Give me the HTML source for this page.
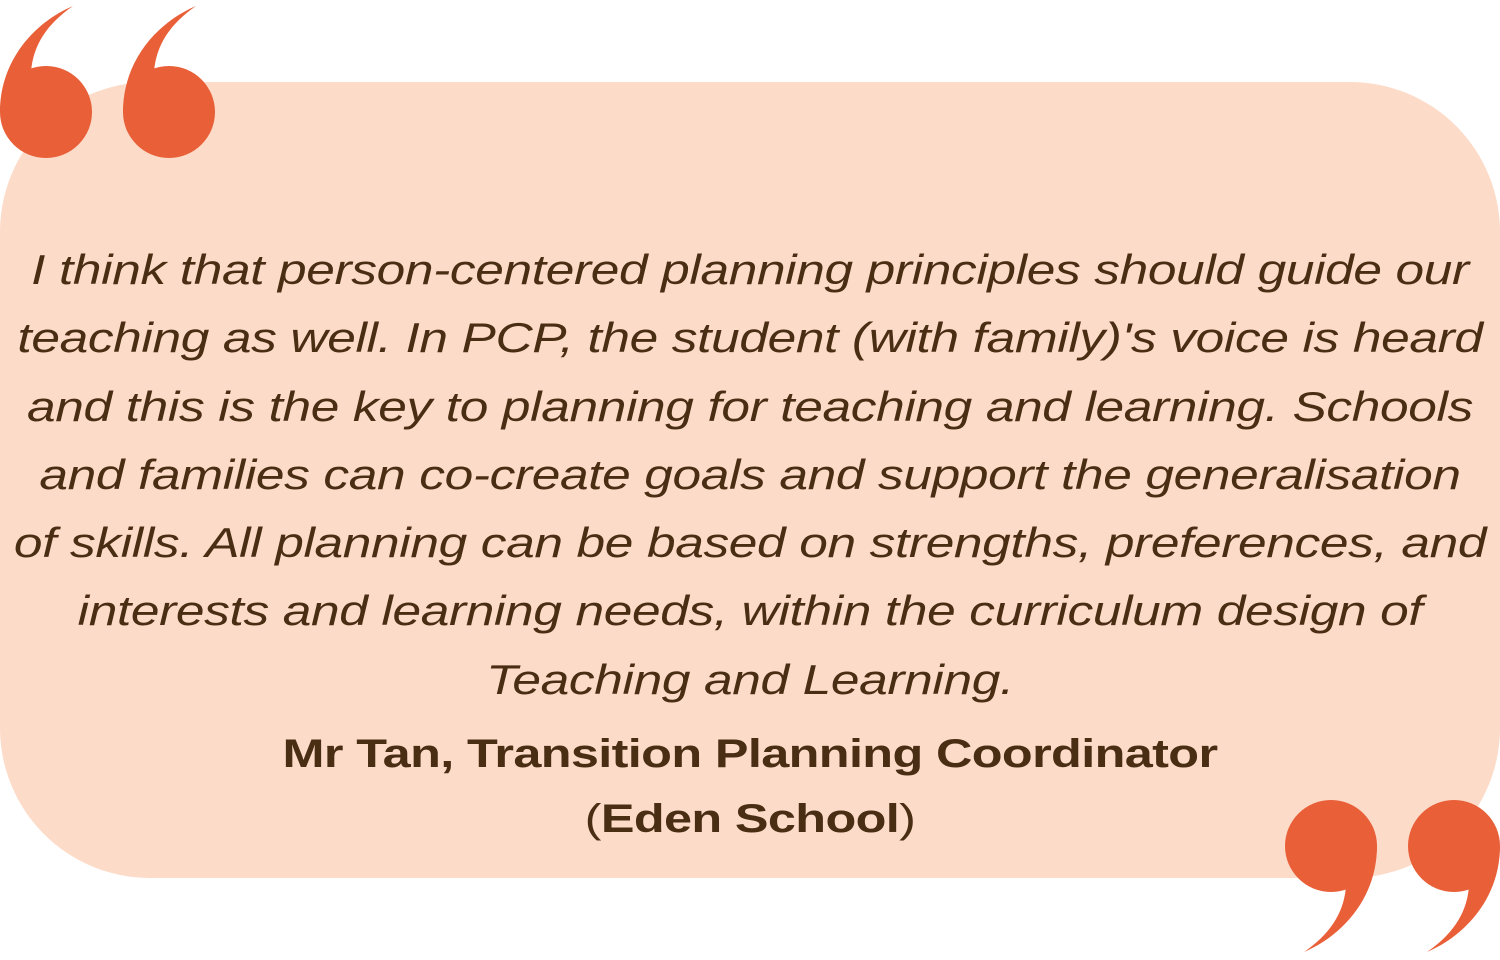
<!DOCTYPE html>
<html><head><meta charset="utf-8"><style>
html,body{margin:0;padding:0;background:#fff;}
body{width:1500px;height:960px;position:relative;overflow:hidden;}
.box{position:absolute;left:0;top:82px;width:1500px;height:796px;background:#fddbc9;border-radius:150px;}
.q{position:absolute;left:0;top:236px;width:1500px;text-align:center;font-family:"Liberation Sans",sans-serif;font-style:italic;font-size:42px;line-height:68.3px;color:#4a2e14;letter-spacing:-0.3px;transform:scaleX(1.225);transform-origin:750px 0;}
.n{position:absolute;left:0;top:722px;width:1500px;text-align:center;font-family:"Liberation Sans",sans-serif;font-weight:bold;font-size:40px;line-height:65px;color:#4a2e14;letter-spacing:-0.5px;transform:scaleX(1.26);transform-origin:750px 0;}
.n span{font-weight:normal}
svg{position:absolute;left:0;top:0}
</style></head><body>
<div class="box"></div>
<svg width="1500" height="960">
<defs>
<g id="g"><circle cx="46" cy="112" r="46"/><path d="M0,112 C0,60 35,22 73,6 C47,24 33,45 31,72 L46,112 Z"/></g>
</defs>
<g fill="#e85f38">
<use href="#g"/>
<use href="#g" x="123"/>
</g>
<g fill="#e85f38" transform="translate(1377 958) rotate(180)"><use href="#g"/></g>
<g fill="#e85f38" transform="translate(1500 958) rotate(180)"><use href="#g"/></g>
</svg>
<div class="q">I think that person-centered planning principles should guide our<br>teaching as well. In PCP, the student (with family)'s voice is heard<br>and this is the key to planning for teaching and learning. Schools<br>and families can co-create goals and support the generalisation<br>of skills. All planning can be based on strengths, preferences, and<br>interests and learning needs, within the curriculum design of<br>Teaching and Learning.</div>
<div class="n">Mr Tan, Transition Planning Coordinator<br><span>(</span>Eden School<span>)</span></div>
</body></html>
